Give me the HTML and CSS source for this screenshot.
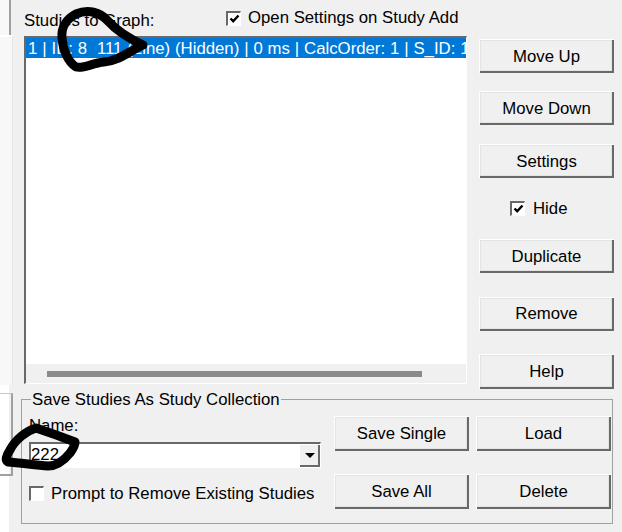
FILE: index.html
```html
<!DOCTYPE html>
<html lang="en">
<head>
<meta charset="utf-8">
<title>Studies to Graph</title>
<link rel="stylesheet" href="styles.css">
</head>
<body>
<div class="dialog">
  <div class="edge">
    <div class="edge-top"></div>
    <div class="edge-mid"></div>
    <div class="edge-gap"></div>
    <div class="edge-low"></div>
    <div class="edge-rest"></div>
  </div>
  <div class="main">
    <div class="top">
      <div class="list-col">
        <div class="list-head">
          <span class="list-title">Studies to Graph:</span>
          <label class="check check-open">
            <span class="box"><svg class="tick" viewBox="0 0 11 11"><path d="M1.5 5.5 L4.2 8.2 L9.5 2.5"/></svg></span>
            <span>Open Settings on Study Add</span>
          </label>
        </div>
        <div class="list">
          <div class="rows">
            <div class="row">1 | ID: 8&nbsp; 111 (Line) (Hidden) | 0 ms | CalcOrder: 1 | S_ID: 1</div>
          </div>
          <div class="hscroll"><div class="thumb"></div></div>
        </div>
      </div>
      <div class="side">
        <button class="btn">Move Up</button>
        <button class="btn m-down">Move Down</button>
        <button class="btn m-settings">Settings</button>
        <label class="check check-hide">
          <span class="box"><svg class="tick" viewBox="0 0 11 11"><path d="M1.5 5.5 L4.2 8.2 L9.5 2.5"/></svg></span>
          <span class="check-label">Hide</span>
        </label>
        <button class="btn m-dup">Duplicate</button>
        <button class="btn m-remove">Remove</button>
        <button class="btn m-help">Help</button>
      </div>
    </div>
    <fieldset class="group">
      <legend class="group-title">Save Studies As Study Collection</legend>
      <div class="group-body">
        <div class="form">
          <div class="name-label">Name:</div>
          <div class="combo">
            <span class="combo-text">222</span>
            <span class="combo-btn"><span class="arrow"></span></span>
          </div>
          <label class="check check-prompt">
            <span class="box"></span>
            <span class="check-label">Prompt to Remove Existing Studies</span>
          </label>
        </div>
        <div class="actions">
          <button class="btn">Save Single</button>
          <button class="btn">Load</button>
          <button class="btn">Save All</button>
          <button class="btn">Delete</button>
        </div>
      </div>
    </fieldset>
  </div>
  <svg class="ink" viewBox="0 0 622 532" aria-hidden="true">
    <path d="M143 45 C128 38 116 30 108 21 C100 12 88 9 76 14 C66 19 61 28 62 38 C63 50 68 62 76 67 C84 69 92 63 104 62 C118 61 128 52 143 45"/>
    <path d="M75 442 C62 437 48 432 36 428 C26 431 15 440 10 450 C6 456 5 460 8 462 C20 463 36 465 48 466 C58 466 66 458 70 453 C73 449 75 445 75 442"/>
  </svg>
</div>
</body>
</html>
```
FILE: styles.css
```css
* {
  box-sizing: border-box;
}

html,
body {
  margin: 0;
  padding: 0;
}

body {
  width: 622px;
  height: 532px;
  overflow: hidden;
  background: #ffffff;
  font-family: "Liberation Sans", Arial, sans-serif;
  font-size: 16.75px;
  line-height: 18px;
  color: #000000;
}

.dialog {
  position: relative;
  display: flex;
  width: 622px;
  height: 532px;
  background: #f0f0f0;
}

/* slivers of the window behind, on the left */
.edge {
  flex: 0 0 13px;
  display: flex;
  flex-direction: column;
}

.edge-top {
  height: 35px;
  width: 11px;
  background: #f8f8f8;
  border-right: 2px solid #a0a0a0;
}

.edge-mid {
  height: 350px;
  background: #f8f8f8;
  border-top: 2px solid #ffffff;
  border-right: 1px solid #e6e6e6;
}

.edge-gap {
  height: 8px;
  width: 9px;
  background: #ffffff;
}

.edge-low {
  height: 83px;
  background: linear-gradient(to right, #ffffff 9px, #f0f0f0 9px);
  border-top: 1px solid #c8c8c8;
  border-right: 2px solid #a0a0a0;
  border-bottom: 2px solid #a0a0a0;
}

.edge-rest {
  flex: 1;
  width: 9px;
  background: #ffffff;
}

.main {
  flex: 1;
  display: flex;
  flex-direction: column;
  min-width: 0;
}

.top {
  display: flex;
  height: 390px;
  padding-left: 11px;
}

.list-col {
  width: 443px;
  margin-right: 12px;
}

.list-head {
  display: flex;
  height: 36px;
  padding-top: 11px;
}

.list-title {
  width: 202px;
  line-height: 20px;
}

.check {
  display: flex;
  align-items: center;
  white-space: nowrap;
}

.check-label {
  padding-top: 2px;
}

.check-open {
  height: 18px;
  margin-top: -2px;
  gap: 7px;
}

.box {
  flex: 0 0 15px;
  width: 15px;
  height: 15px;
  display: flex;
  align-items: center;
  justify-content: center;
  background: #ffffff;
  border-style: solid;
  border-width: 2px 1px 1px 2px;
  border-color: #696969 #ffffff #ffffff #696969;
}

.tick {
  width: 11px;
  height: 11px;
  fill: none;
  stroke: #000000;
  stroke-width: 2.4;
}

.list {
  height: 348px;
  border-style: solid;
  border-width: 2px 1px 1px 2px;
  border-color: #696969 #ffffff #ffffff #696969;
  display: flex;
  flex-direction: column;
}

.rows {
  flex: 1;
  background: #ffffff;
  overflow: hidden;
}

.row {
  height: 20px;
  background: #0078d7;
  color: #ffffff;
  white-space: nowrap;
  overflow: hidden;
  padding-top: 2px;
  padding-left: 2px;
  word-spacing: 0.25px;
}

.hscroll {
  flex: 0 0 19px;
  padding: 7px 44px 6px 21px;
}

.thumb {
  height: 6px;
  background: #8a8a8a;
}

.side {
  width: 135px;
  padding-top: 39px;
  display: flex;
  flex-direction: column;
}

.btn {
  width: 135px;
  height: 34px;
  flex: 0 0 34px;
  padding: 2px 0 0;
  font: inherit;
  color: #000000;
  background: #f0f0f0;
  border: 0;
  box-shadow:
    inset 1px 1px 0 #ffffff,
    inset -2px -2px 0 #696969,
    inset 2px 2px 0 #e3e3e3,
    inset -3px -3px 0 #e3e3e3;
}

.m-down {
  margin-top: 18px;
}

.m-settings {
  margin-top: 19px;
}

.check-hide {
  gap: 8px;
  height: 18px;
  margin-top: 21px;
  margin-left: 31px;
}

.m-dup {
  margin-top: 22px;
}

.m-remove {
  margin-top: 24px;
  padding-top: 0;
}

.m-help {
  flex-basis: 35px;
  height: 35px;
  margin-top: 23px;
  padding-top: 0;
}

.group {
  width: 592px;
  height: 134px;
  margin: 0 0 0 8px;
  padding: 8px 1px 0 7px;
  border: 1px solid #a0a0a0;
  min-inline-size: 0;
}

.group-title {
  padding: 0 1px;
  margin-left: 2px;
  height: 18px;
  line-height: 20px;
  white-space: nowrap;
}

.group-body {
  display: flex;
}

.form {
  width: 292px;
  margin-right: 13px;
}

.name-label {
  height: 18px;
  line-height: 20px;
}

.combo {
  display: flex;
  height: 26px;
  margin-top: 8px;
  background: #ffffff;
  border-style: solid;
  border-width: 2px 1px 1px 2px;
  border-color: #696969 #ffffff #ffffff #696969;
}

.combo-text {
  flex: 1;
  line-height: 22px;
}

.combo-btn {
  width: 21px;
  display: flex;
  align-items: center;
  justify-content: center;
  background: #f0f0f0;
  box-shadow:
    inset 1px 1px 0 #ffffff,
    inset -2px -2px 0 #696969;
}

.arrow {
  width: 0;
  height: 0;
  border-left: 5px solid transparent;
  border-right: 5px solid transparent;
  border-top: 5px solid #000000;
}

.check-prompt {
  gap: 7px;
  height: 18px;
  margin-top: 16px;
}

.actions {
  display: grid;
  grid-template-columns: 135px 135px;
  column-gap: 7px;
  row-gap: 23px;
  grid-auto-rows: 35px;
}

.actions .btn {
  height: 35px;
  padding: 0;
}

.ink {
  position: absolute;
  left: 0;
  top: 0;
  width: 622px;
  height: 532px;
  pointer-events: none;
  fill: none;
  stroke: #000000;
  stroke-width: 9;
  stroke-linecap: round;
  stroke-linejoin: round;
}
```
